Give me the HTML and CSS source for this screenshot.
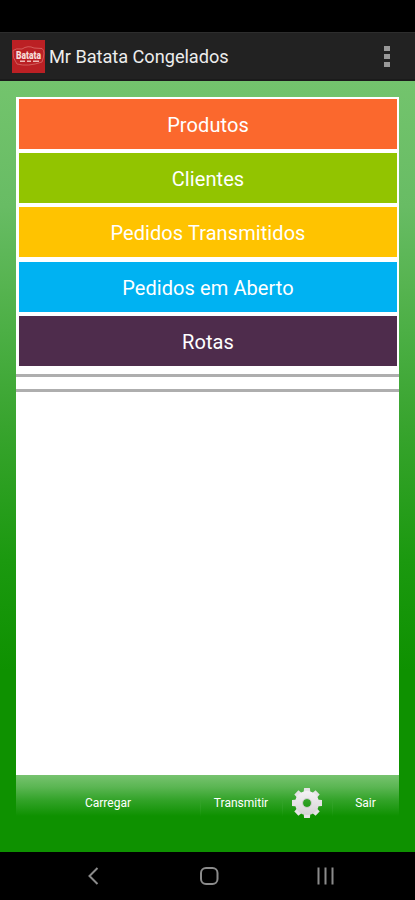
FILE: index.html
```html
<!DOCTYPE html>
<html lang="pt-BR">
<head>
<meta charset="utf-8">
<title>Mr Batata Congelados</title>
<link rel="stylesheet" href="styles.css">
</head>
<body>
<div class="status"></div>
<header class="bar">
  <svg class="logo" viewBox="0 0 35 33" width="35" height="33">
    <rect x="1" width="33" height="33" fill="#bb2024"/>
    <path d="M2 10.500 Q5 8 11 9 Q17 5 23 8 L31 8.500 Q35 11 31 22 Q17 27 6 24 Q1 18 2 10.500Z" fill="none" stroke="#d96b68" stroke-width=".8"/>
    <text x="5" y="18.500" textLength="25" lengthAdjust="spacingAndGlyphs" class="logo-name">Batata</text>
    <path d="M9 21.200h5M16 21.200h4M22 21.200h6" stroke="#eeb9b5" stroke-width="1.600"/>
  </svg>
  <h1>Mr Batata Congelados</h1>
  <div class="more"><i></i><i></i><i></i></div>
</header>
<main class="screen">
  <section class="panel">
    <nav class="menu">
      <a class="item orange">Produtos</a>
      <a class="item lime">Clientes</a>
      <a class="item yellow">Pedidos Transmitidos</a>
      <a class="item blue">Pedidos em Aberto</a>
      <a class="item purple">Rotas</a>
    </nav>
    <div class="strip"></div>
  </section>
  <footer class="tools">
    <a>Carregar</a>
    <a>Transmitir</a>
    <a><svg viewBox="-16 -16 32 32" width="32" height="32">
      <defs>
        <linearGradient id="metal" x1="0" y1="0" x2="0" y2="1"><stop offset="0" stop-color="#f5f2f5"/><stop offset="1" stop-color="#d5d3d5"/></linearGradient>
        <path id="tooth" d="M-3.500 -9 L-2.900 -15 H2.900 L3.500 -9Z"/>
      </defs>
      <g fill="#e6e3e6">
        <use href="#tooth"/><use href="#tooth" transform="rotate(45)"/><use href="#tooth" transform="rotate(90)"/><use href="#tooth" transform="rotate(135)"/><use href="#tooth" transform="rotate(180)"/><use href="#tooth" transform="rotate(225)"/><use href="#tooth" transform="rotate(270)"/><use href="#tooth" transform="rotate(315)"/>
      </g>
      <path fill="url(#metal)" fill-rule="evenodd" d="M0 -12A12 12 0 1 1 0 12A12 12 0 1 1 0 -12ZM0 -4A4 4 0 1 0 0 4A4 4 0 1 0 0 -4Z"/>
      <circle r="4.500" fill="none" stroke="#bfc7bd" stroke-width=".8"/>
    </svg></a>
    <a>Sair</a>
  </footer>
</main>
<div class="system">
  <svg viewBox="0 0 415 48" width="415" height="48" fill="none" stroke="#8b8b8b" stroke-width="2">
    <path d="M97.500 16 L89.500 24 L97.500 32"/>
    <rect x="201" y="16" width="16.500" height="16" rx="5"/>
    <path d="M318.500 15.500V32.500M325.500 15.500V32.500M332.500 15.500V32.500"/>
  </svg>
</div>
</body>
</html>
```
FILE: styles.css
```css
* { box-sizing: border-box; }
body {
  margin: 0;
  width: 415px;
  height: 900px;
  overflow: hidden;
  display: flex;
  flex-direction: column;
  background: #000;
  color: #fff;
  font-family: Roboto, sans-serif;
}
.status { height: 32px; }
.bar {
  height: 49px;
  padding: 0 23px 0 11px;
  display: flex;
  align-items: center;
  background: #222;
  border-top: 1px solid #2d2d2d;
  border-bottom: 2px solid #1b1b1b;
}
.logo { flex: none; }
.logo-name {
  font: 900 10px Roboto, sans-serif;
  fill: #f7dcd8;
}
h1 {
  margin: 0 auto 0 3px;
  padding-top: 2px;
  color: #ededed;
  font-size: 18.2px;
  font-weight: 400;
  line-height: 24px;
  letter-spacing: -.04px;
  white-space: nowrap;
}
.more { display: grid; gap: 3px; padding-right: 2px; }
.more i { width: 6px; height: 5px; background: #999; }
.screen {
  height: 771px;
  padding: 16px 16px 0;
  background: linear-gradient(#73c46d 0, #68bc64 125px, #4caf45 250px, #38a42e 345px, #1b990f 480px, #0e9100 590px);
}
.panel {
  height: 678px;
  padding-top: 2px;
  background: #fff;
}
.menu {
  display: grid;
  gap: 4.200px;
  padding: 0 2px 0 3px;
}
.item {
  height: 50px;
  display: flex;
  align-items: center;
  justify-content: center;
  padding-top: 2px;
  font-size: 20px;
  letter-spacing: .08px;
}
.orange { background: #fb682d; }
.lime { background: #92c400; }
.yellow { background: #ffc300; }
.blue { background: #00b2f2; }
.purple { background: #4e2c4c; }
.strip {
  margin-top: 8px;
  height: 18px;
  border: solid #aeaeae;
  border-width: 3px 0;
}
.tools {
  height: 55px;
  display: grid;
  grid-template-columns: 184px 82px 50px 1fr;
  background: linear-gradient(#77c36f 0, #5bb653 12px, #33a329 25px, #0e9100 41px);
  font-size: 12px;
}
.tools a {
  display: flex;
  align-items: center;
  justify-content: center;
}
.tools a + a {
  background: linear-gradient(#3aa83000, #3aa83080, #3aa83000) left 20px / 1px 22px no-repeat;
}
.system { height: 48px; }
```
